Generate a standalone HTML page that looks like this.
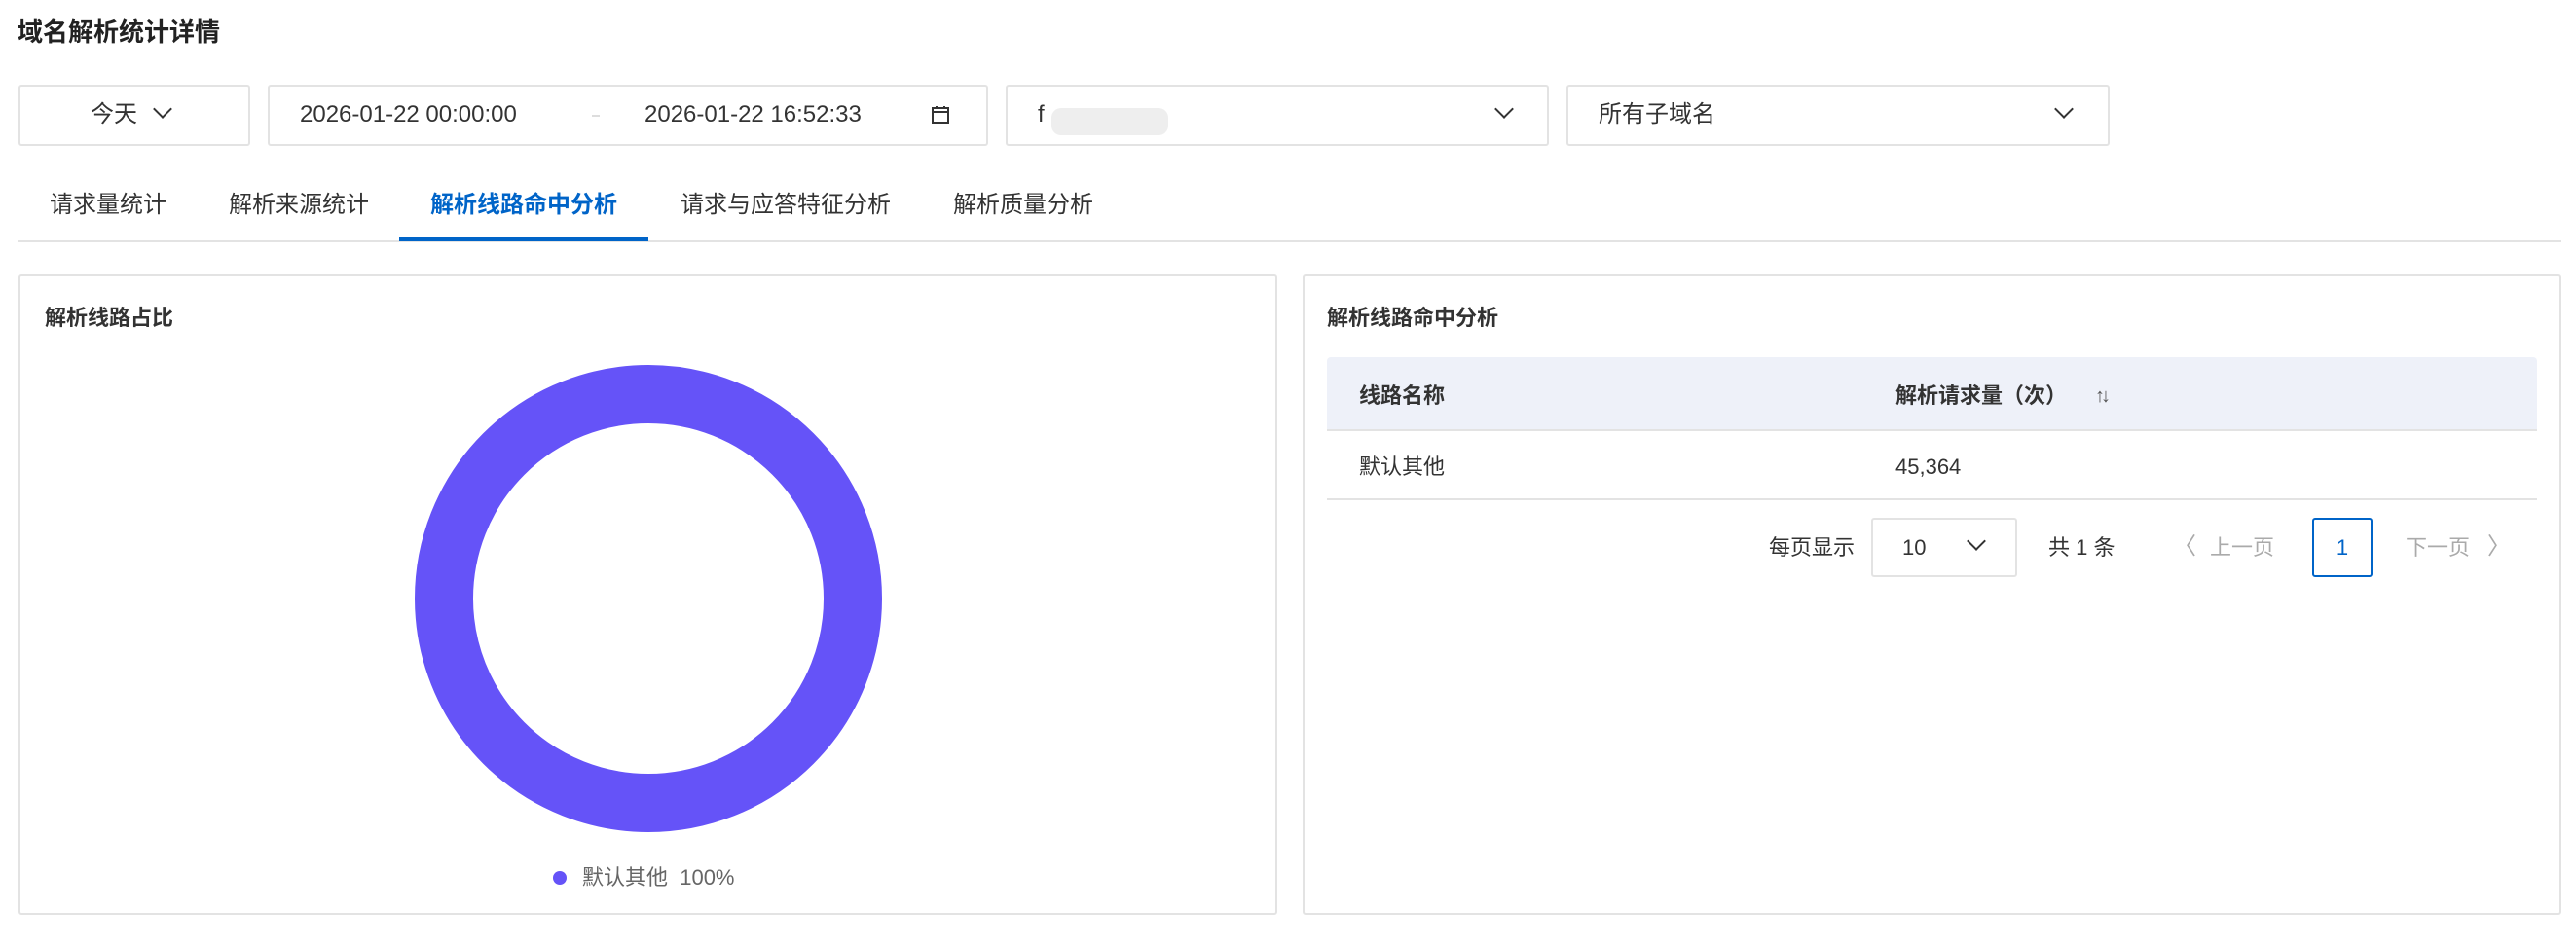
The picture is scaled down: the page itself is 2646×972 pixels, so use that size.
<!DOCTYPE html>
<html><head><meta charset="utf-8"><style>
*{box-sizing:border-box;margin:0;padding:0}
body{width:2646px;height:972px;background:#fff;font-family:"Liberation Sans","Noto Sans CJK SC",sans-serif;color:#333;position:relative;overflow:hidden}
.a{position:absolute;white-space:nowrap;line-height:1}
.box{position:absolute;border:2px solid #e3e3e3;border-radius:3px;background:#fff}
.t{font-size:24px;line-height:24px}
.chev{position:absolute;width:14px;height:14px;border-right:2.5px solid #333;border-bottom:2.5px solid #333;transform:rotate(45deg)}
</style></head><body>
<div class="a" style="left:18px;top:20px;font-size:26px;font-weight:bold;color:#222">域名解析统计详情</div>

<div class="box" style="left:19px;top:87px;width:238px;height:63px"></div>
<div class="a t" style="left:93px;top:106px">今天</div>
<div class="chev" style="left:160px;top:105px"></div>

<div class="box" style="left:275px;top:87px;width:740px;height:63px"></div>
<div class="a t" style="left:308px;top:106px">2026-01-22 00:00:00</div>
<div class="a" style="left:608px;top:118px;width:8px;height:2px;background:#ddd"></div>
<div class="a t" style="left:662px;top:106px">2026-01-22 16:52:33</div>
<svg class="a" style="left:956px;top:108px" width="20" height="20" viewBox="0 0 20 20"><rect x="2" y="3" width="16" height="15" fill="none" stroke="#333" stroke-width="2"/><line x1="2" y1="7" x2="18" y2="7" stroke="#333" stroke-width="2"/><line x1="6" y1="1" x2="6" y2="4" stroke="#333" stroke-width="2"/><line x1="14" y1="1" x2="14" y2="4" stroke="#333" stroke-width="2"/></svg>

<div class="box" style="left:1033px;top:87px;width:558px;height:63px"></div>
<div class="a t" style="left:1066px;top:106px">f</div>
<div class="a" style="left:1080px;top:111px;width:120px;height:28px;background:#eee;border-radius:10px"></div>
<div class="chev" style="left:1538px;top:105px"></div>

<div class="box" style="left:1609px;top:87px;width:558px;height:63px"></div>
<div class="a t" style="left:1642px;top:106px">所有子域名</div>
<div class="chev" style="left:2113px;top:105px"></div>

<div class="a t" style="left:51px;top:199px">请求量统计</div>
<div class="a t" style="left:235px;top:199px">解析来源统计</div>
<div class="a t" style="left:442px;top:199px;color:#0064c8;font-weight:bold">解析线路命中分析</div>
<div class="a t" style="left:699px;top:199px">请求与应答特征分析</div>
<div class="a t" style="left:979px;top:199px">解析质量分析</div>
<div class="a" style="left:19px;top:247px;width:2612px;height:2px;background:#e3e3e3"></div>
<div class="a" style="left:410px;top:244px;width:256px;height:4px;background:#0064c8"></div>

<div class="box" style="left:19px;top:282px;width:1293px;height:658px"></div>
<div class="a" style="left:46px;top:316px;font-size:22px;font-weight:bold">解析线路占比</div>
<svg class="a" style="left:0;top:0" width="1312" height="940"><circle cx="666" cy="615" r="210" fill="none" stroke="#6553f8" stroke-width="60"/><circle cx="575" cy="902" r="7" fill="#6553f8"/></svg>
<div class="a" style="left:598px;top:891px;font-size:22px;color:#666">默认其他&nbsp; 100%</div>

<div class="box" style="left:1338px;top:282px;width:1293px;height:658px"></div>
<div class="a" style="left:1363px;top:316px;font-size:22px;font-weight:bold">解析线路命中分析</div>
<div class="a" style="left:1363px;top:367px;width:1243px;height:76px;background:#eef1f9;border-bottom:2px solid #e3e3e3;border-radius:4px 4px 0 0"></div>
<div class="a" style="left:1396px;top:396px;font-size:22px;font-weight:bold">线路名称</div>
<div class="a" style="left:1947px;top:396px;font-size:22px;font-weight:bold">解析请求量（次）</div>
<div class="a" style="left:2152px;top:397px;font-size:20px;color:#555;letter-spacing:-4px">↑↓</div>
<div class="a" style="left:1396px;top:469px;font-size:22px">默认其他</div>
<div class="a" style="left:1947px;top:469px;font-size:22px">45,364</div>
<div class="a" style="left:1363px;top:512px;width:1243px;height:2px;background:#e3e3e3"></div>

<div class="a" style="left:1817px;top:552px;font-size:22px">每页显示</div>
<div class="box" style="left:1922px;top:532px;width:150px;height:61px"></div>
<div class="a" style="left:1954px;top:552px;font-size:22px">10</div>
<div class="chev" style="left:2023px;top:549px"></div>
<div class="a" style="left:2104px;top:552px;font-size:22px">共 1 条</div>
<div class="a" style="left:2232px;top:550px;font-size:24px;color:#aaa">〈</div>
<div class="a" style="left:2270px;top:552px;font-size:22px;color:#aaa">上一页</div>
<div class="a" style="left:2375px;top:532px;width:62px;height:61px;border:2px solid #0064c8;border-radius:3px;color:#0064c8;font-size:22px;text-align:center;line-height:57px">1</div>
<div class="a" style="left:2471px;top:552px;font-size:22px;color:#aaa">下一页</div>
<div class="a" style="left:2555px;top:550px;font-size:24px;color:#aaa">〉</div>
</body></html>
